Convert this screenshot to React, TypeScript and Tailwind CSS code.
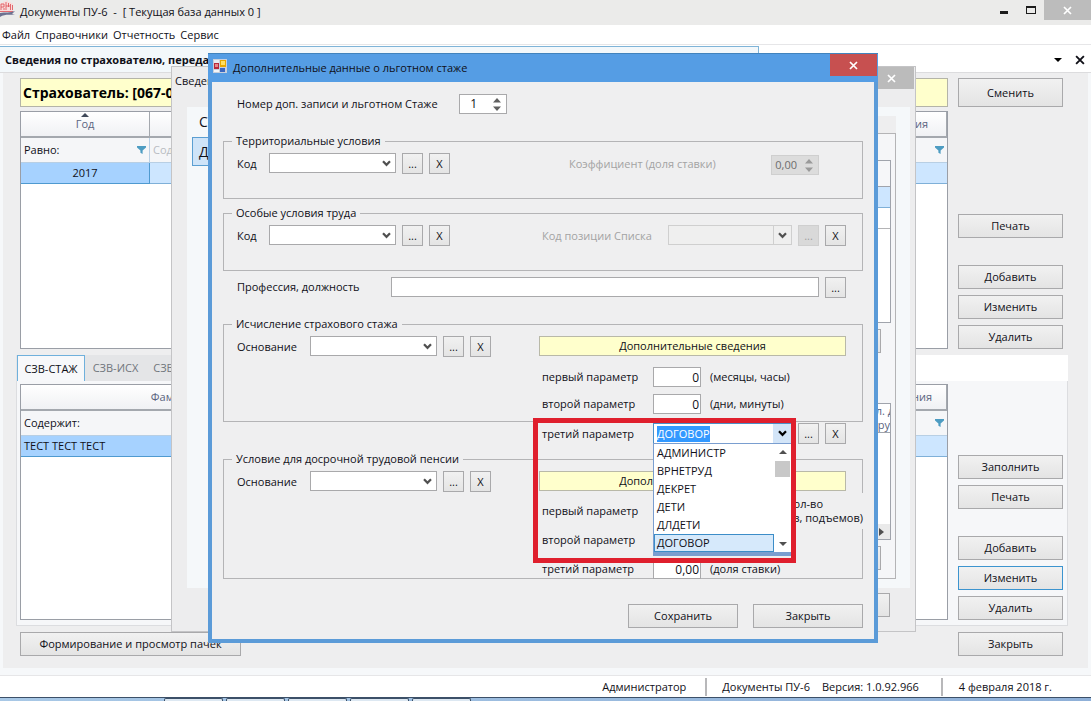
import { useEffect, useRef, type ReactNode } from "react";

function Chevron({ className = "text-[#505050]" }: { className?: string }) {
  return (
    <svg viewBox="0 0 9 7" className={`h-[7px] w-[9px] ${className}`} fill="none" stroke="currentColor" strokeWidth="2.2">
      <path d="M1 1.2 4.5 4.8 8 1.2" />
    </svg>
  );
}

function Cross({ className = "h-[9px] w-[9px]" }: { className?: string }) {
  return (
    <svg viewBox="0 0 9 9" className={className} fill="none" stroke="currentColor" strokeWidth="1.7">
      <path d="M1 1 8 8M8 1 1 8" />
    </svg>
  );
}

function Funnel() {
  return (
    <svg viewBox="0 0 9 8" className="h-2 w-[9px] shrink-0" fill="#4d9cc2">
      <path d="M0 0H9V1.4L5.6 4.4V8L3.4 6.8V4.4L0 1.4Z" />
    </svg>
  );
}

function Spin({ color = "#606060" }: { color?: string }) {
  return (
    <svg viewBox="0 0 8 13" className="h-[13px] w-2 shrink-0" fill={color}>
      <path d="M4 0 8 4.5H0ZM4 13 0 8.5H8Z" />
    </svg>
  );
}

function Btn({ children, className = "h-6", active = false }: { children: ReactNode; className?: string; active?: boolean }) {
  return (
    <button
      type="button"
      className={`shrink-0 border bg-linear-to-b from-[#f1f1f1] to-[#e4e4e4] ${active ? "border-[#3c94cf]" : "border-[#a9a9ab]"} ${className}`}
    >
      {children}
    </button>
  );
}

function Small({ children, label, disabled = false }: { children: ReactNode; label: string; disabled?: boolean }) {
  return (
    <button
      type="button"
      aria-label={label}
      disabled={disabled}
      className="h-[21px] w-[21px] shrink-0 border border-[#a9a9ab] bg-linear-to-b from-[#f1f1f1] to-[#e4e4e4] leading-4 disabled:border-[#cfcfcf] disabled:from-[#d9d9d9] disabled:to-[#d9d9d9] disabled:text-[#a0a0a0]"
    >
      {children}
    </button>
  );
}

function Combo({ id, disabled = false, className = "w-[127px]" }: { id: string; disabled?: boolean; className?: string }) {
  return (
    <span className={`relative block h-5 shrink-0 ${className}`}>
      <select
        id={id}
        disabled={disabled}
        className="block h-5 w-full appearance-none border border-[#a9a9ab] bg-white disabled:border-[#cfcfcf] disabled:bg-[#efefef]"
      >
        <option></option>
      </select>
      <span
        className={`pointer-events-none absolute inset-y-0 right-0 flex w-[19px] items-center justify-center ${disabled ? "border border-[#cfcfcf]" : ""}`}
      >
        <Chevron />
      </span>
    </span>
  );
}

function Group({ title, className, children }: { title: string; className: string; children: ReactNode }) {
  return (
    <fieldset className={`border border-[#b4b4b6] ${className}`}>
      <legend className="-ml-[5px] px-1 leading-4">{title}</legend>
      {children}
    </fieldset>
  );
}

function Basis({ id }: { id: string }) {
  return (
    <div className="flex items-start">
      <label htmlFor={id} className="w-[73px] leading-[21px]">
        Основание
      </label>
      <Combo id={id} />
      <div className="ml-1.5 flex gap-1.5">
        <Small label="Выбрать основание">...</Small>
        <Small label="Очистить основание">X</Small>
      </div>
    </div>
  );
}

function Param({ id, label, value, hint }: { id: string; label: string; value: string; hint: ReactNode }) {
  return (
    <div className="flex h-5 items-center">
      <label htmlFor={id} className="w-28 shrink-0 pl-px whitespace-nowrap">
        {label}
      </label>
      <input id={id} defaultValue={value} className="h-5 w-12 shrink-0 border border-[#a9a9ab] bg-white pr-px text-right text-[12px]" />
      <span className="ml-[9px] shrink-0 whitespace-nowrap">{hint}</span>
    </div>
  );
}

function Note() {
  return (
    <div className="h-5 border border-[#b9b9a8] bg-[#ffffcc] text-center leading-[18px]">Дополнительные сведения</div>
  );
}

const options = ["АДМИНИСТР", "ВРНЕТРУД", "ДЕКРЕТ", "ДЕТИ", "ДЛДЕТИ", "ДОГОВОР"];

function ThirdParam() {
  const ref = useRef<HTMLInputElement>(null);
  useEffect(() => {
    ref.current?.focus();
    ref.current?.select();
  }, []);
  return (
    <div className="relative flex w-[307px] items-start">
      <label htmlFor="third" className="w-[114px] pl-[3px] leading-[21px]">
        третий параметр
      </label>
      <div className="relative flex h-[21px] w-[139px] border border-[#4a90c8] bg-white">
        <input
          id="third"
          ref={ref}
          defaultValue="ДОГОВОР"
          className="min-w-0 flex-1 bg-white pl-[3px] leading-4 outline-none selection:bg-[#3399ff] selection:text-white"
        />
        <button type="button" aria-label="Открыть список" className="flex w-[18px] items-center justify-center bg-[#d3e5f8]">
          <Chevron className="text-black" />
        </button>
        <div className="absolute top-full -left-px z-10 flex h-[113px] w-[139px] border border-b-4 border-[#7a9ed0] bg-white">
          <ul role="listbox" className="flex-1 leading-[18px]">
            {options.map((o) => (
              <li
                key={o}
                role="option"
                aria-selected={o === "ДОГОВОР"}
                className="h-[18px] pl-[3px] aria-selected:bg-[#d6e9fb] aria-selected:outline aria-selected:-outline-offset-1 aria-selected:outline-[#3c8dc8]"
              >
                {o}
              </li>
            ))}
          </ul>
          <div className="flex w-[17px] flex-col items-center py-[6px]">
            <svg viewBox="0 0 8 4" className="h-1 w-2" fill="#505050">
              <path d="M4 0 8 4H0Z" />
            </svg>
            <div className="mt-[7px] h-4 w-[15px] bg-[#c8c8c8]" />
            <svg viewBox="0 0 8 4" className="mt-auto h-1 w-2" fill="#505050">
              <path d="M0 0H8L4 4Z" />
            </svg>
          </div>
        </div>
      </div>
      <div className="ml-1.5 flex gap-1.5">
        <Small label="Выбрать третий параметр">...</Small>
        <Small label="Очистить третий параметр">X</Small>
      </div>
      <div className="pointer-events-none absolute -top-[5px] -left-[6px] z-20 h-[145px] w-[263px] border-[5px] border-[#df1f2d]" />
    </div>
  );
}

function Dialog() {
  return (
    <section className="absolute top-[53px] left-[208px] w-[670px] border-4 border-t-0 border-[#5b9bd8] bg-[#efeff0]">
      <header className="-mx-1 flex h-[29px] items-start border-t border-[#4183bd] bg-[#559de4]">
        <svg viewBox="0 0 14 14" className="mt-[5px] ml-[5px] h-[14px] w-[14px]">
          <rect width="14" height="14" fill="#c9d0dc" />
          <rect x="1" y="1" width="5" height="3" fill="#e8ecf2" />
          <rect x="1" y="4" width="5" height="6" fill="#b8283c" />
          <rect x="2" y="5" width="3" height="3" fill="#e88888" />
          <rect x="7" y="1" width="6" height="7" fill="#e8a800" />
          <rect x="8" y="2" width="4" height="4" fill="#ffe060" />
          <rect x="1" y="11" width="5" height="2" fill="#f4f6f8" />
          <rect x="7" y="9" width="5" height="4" fill="#3c68c0" />
        </svg>
        <h2 className="ml-1.5 leading-[28px]">Дополнительные данные о льготном стаже</h2>
        <button
          type="button"
          aria-label="Закрыть окно"
          className="mr-px ml-auto flex h-[22px] w-[47px] items-center justify-center bg-[#c75050] text-white"
        >
          <Cross />
        </button>
      </header>
      <div className="px-[11px] pt-3 pb-[11px]">
        <div className="flex items-start pl-[14px]">
          <label htmlFor="num" className="w-[222px] leading-[19px]">
            Номер доп. записи и льготном Стаже
          </label>
          <span className="flex h-5 w-12 items-center border border-[#a9a9ab] bg-white pr-[5px]">
            <input id="num" defaultValue="1" className="w-0 min-w-0 flex-1 bg-white pr-4 text-right text-[12px] leading-4" />
            <Spin />
          </span>
        </div>

        <Group title="Территориальные условия" className="mt-[19px] h-[66px] pr-[43px] pl-[13px]">
          <div className="flex items-start pt-1">
            <label htmlFor="code1" className="w-8 leading-[21px]">
              Код
            </label>
            <Combo id="code1" />
            <div className="ml-1.5 flex gap-1.5">
              <Small label="Выбрать код условия">...</Small>
              <Small label="Очистить код условия">X</Small>
            </div>
            <label htmlFor="coef" className="ml-auto w-[202px] leading-[21px] text-[#a3a3a3]">
              Коэффициент (доля ставки)
            </label>
            <span className="mt-0.5 flex h-5 w-12 items-center border border-[#cfcfcf] bg-[#dcdcdc] pr-[5px]">
              <input
                id="coef"
                disabled
                defaultValue="0,00"
                className="w-0 min-w-0 flex-1 bg-[#dcdcdc] pr-2 text-right leading-4 text-[#6d6d6d]"
              />
              <Spin color="#9a9a9a" />
            </span>
          </div>
        </Group>

        <Group title="Особые условия труда" className="mt-1.5 h-[66px] pr-4 pl-[13px]">
          <div className="flex items-start pt-1">
            <label htmlFor="code2" className="w-8 leading-[21px]">
              Код
            </label>
            <Combo id="code2" />
            <div className="ml-1.5 flex gap-1.5">
              <Small label="Выбрать код условий труда">...</Small>
              <Small label="Очистить код условий труда">X</Small>
            </div>
            <label htmlFor="pos" className="ml-auto w-[126px] leading-[21px] text-[#a3a3a3]">
              Код позиции Списка
            </label>
            <Combo id="pos" disabled className="w-[124px]" />
            <div className="ml-1.5 flex gap-1.5">
              <Small label="Выбрать позицию Списка" disabled>
                ...
              </Small>
              <Small label="Очистить позицию Списка">X</Small>
            </div>
          </div>
        </Group>

        <div className="mt-1.5 flex items-start pr-[17px] pl-[14px]">
          <label htmlFor="job" className="w-[154px] leading-[19px]">
            Профессия, должность
          </label>
          <input id="job" className="h-5 min-w-0 flex-1 border border-[#a9a9ab] bg-white px-1" />
          <div className="ml-1.5">
            <Small label="Выбрать профессию">...</Small>
          </div>
        </div>

        <Group title="Исчисление страхового стажа" className="mt-[18px] h-[106px] pr-4 pl-[13px]">
          <div className="flex items-start justify-between pt-1">
            <Basis id="basis1" />
            <div className="flex w-[307px] flex-col">
              <Note />
              <div className="mt-[11px] flex flex-col gap-[7px] pl-0.5">
                <Param id="p11" label="первый параметр" value="0" hint="(месяцы, часы)" />
                <Param id="p12" label="второй параметр" value="0" hint="(дни, минуты)" />
              </div>
            </div>
          </div>
        </Group>
        <div className="mt-px flex h-[21px] justify-end pr-[17px]">
          <ThirdParam />
        </div>

        <Group title="Условие для досрочной трудовой пенсии" className="mt-[7px] h-[128px] pr-4 pl-[13px]">
          <div className="flex items-start justify-between pt-1">
            <Basis id="basis2" />
            <div className="flex w-[307px] flex-col">
              <Note />
              <div className="mt-[10px] flex flex-col gap-[9px] pl-0.5">
                <Param
                  id="p21"
                  label="первый параметр"
                  value="0"
                  hint={
                    <span className="block w-[153px] bg-[#efeff0] py-1 text-right leading-[14px]">
                      <span className="block pr-10">(кол-во</span>
                      <span className="block">часов, подъемов)</span>
                    </span>
                  }
                />
                <Param id="p22" label="второй параметр" value="0" hint="" />
                <Param id="p23" label="третий параметр" value="0,00" hint="(доля ставки)" />
              </div>
            </div>
          </div>
        </Group>

        <div className="mt-[25px] flex justify-end gap-[15px]">
          <Btn className="h-6 w-[110px]">Сохранить</Btn>
          <Btn className="h-6 w-[110px]">Закрыть</Btn>
        </div>
      </div>
    </section>
  );
}

function MiddleWindow() {
  return (
    <section className="absolute top-[66px] left-[171px] flex h-[566px] w-[745px] flex-col border border-[#c4c4c6] bg-[#ededee]">
      <header className="flex h-10 items-start">
        <h2 className="pt-[5px] pl-[3px] leading-[18px]">Сведения</h2>
        <button
          type="button"
          aria-label="Закрыть сведения"
          className="mr-px ml-auto flex h-[22px] w-[46px] items-center justify-center bg-[#bbb] text-white"
        >
          <Cross />
        </button>
      </header>
      <div className="mr-[5px] ml-[15px] flex h-[481px] bg-[#f5f8fa]">
        <nav className="w-[120px] pl-[5px] text-[14px]">
          <a href="#main" className="block pl-[7px] leading-[30px]">
            Сотрудник
          </a>
          <a href="#extra" className="block border border-[#5b9fd2] bg-[#cfe4f8] pl-[6px] leading-[27px]">
            Данные
          </a>
        </nav>
        <div className="mr-[14px] flex-1 pt-[9px]">
          <div className="h-[17px] bg-[#eeeeef]" />
          <div className="flex h-[446px] flex-col items-end border border-[#b4b4b6] bg-[#f5f6f8] pr-1">
            <div className="mt-[26px] h-[163px] w-full border border-[#a0a4ac] bg-white">
              <div className="h-[26px] border-b border-[#a0a4ac] bg-[#f6f7f9]" />
              <div className="h-[21px] border-b border-[#7fb0d8] bg-[#cde6ff]" />
              <div className="h-[21px] border-b border-[#b4b4b6]" />
            </div>
            <Btn className="mt-[6px] mr-[10px] h-6 w-24">{""}</Btn>
            <div className="mt-[50px] flex h-[137px] w-full flex-col border border-[#a0a4ac] bg-white">
              <div className="overflow-hidden border-b border-[#a0a4ac] text-right leading-[14px] text-[#5a6480]">
                <div className="-mr-1">л. д</div>
                <div>гру</div>
              </div>
              <div className="mt-auto flex h-[15px] items-center justify-end bg-[#eaeaea] pr-[6px]">
                <svg viewBox="0 0 5 8" className="h-2 w-[5px]" fill="#505050">
                  <path d="M0 0 5 4 0 8Z" />
                </svg>
              </div>
            </div>
            <Btn className="mt-[6px] mr-[10px] h-6 w-24">{""}</Btn>
          </div>
        </div>
      </div>
      <Btn className="mt-[5px] mr-[25px] h-6 w-28 self-end">{""}</Btn>
    </section>
  );
}

const head = "border-r border-b-2 border-[#a4a8ae] bg-linear-to-b from-white to-[#f0f1f4] font-normal text-[#5a6480]";
const filter = "h-[25px] border-b border-[#b8cfe4] bg-[#f5f6f8]";
const task = "w-[59px] rounded-t-xs border border-b-0 border-[#3c5068] bg-[#dde8f2]";

export default function App() {
  return (
    <div className="relative flex min-h-screen w-full flex-col bg-[#f6f8fa] font-['Open_Sans','Noto_Sans',sans-serif] text-[11px] leading-4 text-[#101018]">
      <header className="flex h-[25px] items-start bg-[#ebebea]">
        <svg viewBox="0 0 16 17" className="h-[17px] w-4">
          <path d="M0 3H3V1.5H6V0.5H8V2H11V3H13V12H0Z" fill="#f8dcdc" />
          <path
            d="M1 4V10M1 4H4V7H1M6 2V10M8.500 3V7M10.500 4V10M12.500 5V10M0 11.500H13M4 8V10M6 6H10"
            stroke="#dd4b52"
            strokeWidth="0.8"
            fill="none"
          />
          <path d="M0 13C5 12 10 13 15 11L12 14 15 15C9 15 5 14 0 17Z" fill="#6d7191" />
        </svg>
        <h1 className="ml-1 leading-[23px] whitespace-pre">Документы ПУ-6  -  [ Текущая база данных 0 ]</h1>
        <div className="ml-auto flex items-start text-[#1c1c1c]">
          <button type="button" aria-label="Свернуть" className="flex h-5 w-7 items-center justify-center pt-1">
            <span className="h-[3px] w-2 bg-[#1c1c1c]" />
          </button>
          <button type="button" aria-label="Развернуть" className="flex h-5 w-[26px] items-center justify-center">
            <span className="h-2 w-[10px] border border-t-2 border-[#1c1c1c]" />
          </button>
          <button type="button" aria-label="Закрыть" className="flex h-5 w-[47px] items-center justify-center bg-[#bcbcbc] text-white">
            <Cross />
          </button>
        </div>
      </header>

      <nav className="flex h-5 gap-[5px] border-b border-[#e6e6e8] bg-white pl-0.5 leading-5">
        <a href="#file">Файл</a>
        <a href="#refs">Справочники</a>
        <a href="#reports">Отчетность</a>
        <a href="#service">Сервис</a>
      </nav>

      <div className="flex h-7 items-end border-b border-[#dcdcde] bg-white">
        <div className="h-[26px] w-[759px] border-t border-r border-[#7fb4d8] bg-[#f3f8fb] pl-[5px] leading-[25px] font-bold">
          Сведения по страхователю, передаваемые
        </div>
        <div className="mr-[6px] ml-auto flex h-6 items-center gap-[13px]">
          <svg viewBox="0 0 8 4" className="h-1 w-2">
            <path d="M0 0H8L4 4Z" />
          </svg>
          <Cross className="h-[10px] w-[10px]" />
        </div>
      </div>

      <main className="mx-[3px] flex flex-1 flex-col bg-[#eeeeef] pt-[5px] pr-5 pl-[13px]">
        <div className="flex gap-[10px] pr-[5px] pl-1">
          <div className="flex min-w-0 flex-1 flex-col">
            <div className="h-[29px] border border-[#b4b4a8] bg-[#ffffcc] pl-0.5 text-[14px] leading-[27px] font-bold text-black">
              Страхователь: [067-0
            </div>
            <div className="mt-1 flex-1 border border-[#9a9ea6] bg-white">
              <table className="w-full table-fixed border-separate border-spacing-0">
                <thead>
                  <tr className="h-[26px]">
                    <th className={`w-[129px] ${head}`}>
                      <span className="flex flex-col items-center pb-1 leading-[14px]">
                        <svg viewBox="0 0 8 4" className="h-1 w-2" fill="#404858">
                          <path d="M4 0 8 4H0Z" />
                        </svg>
                        Год
                      </span>
                    </th>
                    <th className={head}></th>
                    <th className={`w-[120px] pr-[18px] text-right ${head}`}>Дата заполнения</th>
                  </tr>
                </thead>
                <tbody>
                  <tr>
                    <td className={`border-r pl-[3px] ${filter}`}>
                      <span className="flex items-center justify-between pr-[3px]">
                        Равно: <Funnel />
                      </span>
                    </td>
                    <td className={`pl-[3px] text-[#b8bcc2] ${filter}`}>Содержит:</td>
                    <td className={filter}>
                      <span className="flex justify-end pr-[3px]">
                        <Funnel />
                      </span>
                    </td>
                  </tr>
                  <tr className="h-[21px]">
                    <td className="border-r border-b border-[#4f9ad0] bg-[#a6d2ff] text-center">2017</td>
                    <td className="border-b border-[#7fb0d8] bg-[#cde6ff]"></td>
                    <td className="border-b border-[#7fb0d8] bg-[#cde6ff]"></td>
                  </tr>
                </tbody>
              </table>
            </div>
          </div>
          <div className="flex w-[105px] flex-col">
            <Btn className="h-[29px]">Сменить</Btn>
            <Btn className="mt-[107px] h-6">Печать</Btn>
            <div className="mt-[27px] flex flex-col gap-1.5">
              <Btn>Добавить</Btn>
              <Btn>Изменить</Btn>
              <Btn>Удалить</Btn>
            </div>
          </div>
        </div>

        <div className="mt-1.5 flex h-[26px] items-stretch bg-white leading-6 text-[#70757c]">
          <div className="flex bg-[#e4e5e7] pr-8 pl-px">
            <button type="button" className="w-[68px] border border-b-0 border-[#6fb0dc] bg-[#f7f8fa] text-[#101018]">
              СЗВ-СТАЖ
            </button>
            <button type="button" className="w-[61px]">
              СЗВ-ИСХ
            </button>
            <button type="button" className="w-[67px]">
              СЗВ-КОРР
            </button>
          </div>
        </div>
        <div className="flex gap-[10px] border border-t-0 border-[#dcdde0] bg-[#f6f7f9] pt-[3px] pr-1 pb-[5px] pl-[3px]">
          <div className="min-w-0 flex-1 border border-[#9a9ea6] bg-white">
            <table className="w-full table-fixed border-separate border-spacing-0">
              <thead>
                <tr className="h-[26px]">
                  <th className={`w-[310px] ${head}`}>Фамилия</th>
                  <th className={`pr-[14px] text-right ${head}`}>Дата заполнения</th>
                </tr>
              </thead>
              <tbody>
                <tr>
                  <td className={`pl-[3px] ${filter}`}>Содержит:</td>
                  <td className={filter}>
                    <span className="flex justify-end pr-[3px]">
                      <Funnel />
                    </span>
                  </td>
                </tr>
                <tr className="h-[21px]">
                  <td className="border-b border-[#4f9ad0] bg-[#a6d2ff] pl-[3px]">ТЕСТ ТЕСТ ТЕСТ</td>
                  <td className="border-b border-[#7fb0d8] bg-[#cde6ff]"></td>
                </tr>
              </tbody>
            </table>
          </div>
          <div className="flex w-[105px] flex-col gap-1.5 pt-[71px]">
            <Btn>Заполнить</Btn>
            <Btn>Печать</Btn>
            <Btn className="mt-[21px] h-6">Добавить</Btn>
            <Btn active>Изменить</Btn>
            <Btn>Удалить</Btn>
          </div>
        </div>
        <div className="mt-1.5 flex justify-between pr-[5px] pb-[11px] pl-1">
          <Btn className="h-6 w-[221px]">Формирование и просмотр пачек</Btn>
          <Btn className="h-6 w-[105px]">Закрыть</Btn>
        </div>
      </main>

      <footer className="mt-[7px]">
        <div className="flex h-[22px] items-center justify-end border-t border-[#e6e6e8] bg-white pr-[39px]">
          <span>Администратор</span>
          <span className="mr-[15px] ml-[19px] h-[18px] w-0.5 bg-[#b8b8ba]" />
          <span>Документы ПУ-6</span>
          <span className="ml-3">Версия: 1.0.92.966</span>
          <span className="mr-4 ml-[22px] h-[18px] w-0.5 bg-[#b8b8ba]" />
          <span>4 февраля 2018 г.</span>
        </div>
        <div className="flex h-1 gap-[3px] border-t border-[#3c5068] bg-linear-to-r from-[#a8c8e6] to-[#8fb0d8] pl-[164px]">
          <span className={task} />
          <span className={task} />
          <span className={task} />
          <span className={task} />
          <span className={task} />
        </div>
      </footer>

      <MiddleWindow />
      <Dialog />
    </div>
  );
}
